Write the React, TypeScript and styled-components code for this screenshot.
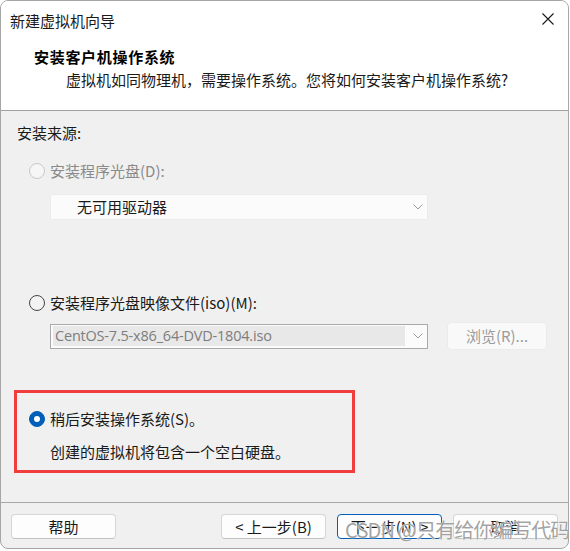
import React from "react";
import styled, { createGlobalStyle } from "styled-components";

const Global = createGlobalStyle`
  html, body { margin: 0; padding: 0; background: #ffffff; }
  body { font-family: "Noto Sans CJK SC", "Microsoft YaHei", sans-serif; font-size: 15px; color: #1a1a1a; }
  * { box-sizing: border-box; }
`;

const Window = styled.div`
  position: relative;
  width: 569px;
  height: 549px;
  border: 1px solid #a6a6a6;
  border-radius: 8px;
  overflow: hidden;
  background: #f0f0f0;
  display: flex;
  flex-direction: column;
`;

const Header = styled.div`
  height: 110px;
  flex: none;
  background: #ffffff;
  border-bottom: 1px solid #a0a0a0;
  display: flex;
  flex-direction: column;
`;

const TitleBar = styled.div`
  height: 39px;
  display: flex;
  align-items: center;
  justify-content: space-between;
  padding: 0 14px 0 9px;
`;

const TitleText = styled.span`
  font-size: 15px;
  line-height: 20px;
  color: #1a1a1a;
`;

const CloseIcon = styled.svg`
  width: 12px;
  height: 12px;
  margin-top: -3px;
`;

const Heading = styled.div`
  margin: 7px 0 0 33px;
  font-size: 15px;
  line-height: 20px;
  font-weight: 700;
  letter-spacing: 0.7px;
  color: #000;
`;

const SubText = styled.div`
  margin: 3px 0 0 65px;
  font-size: 15px;
  line-height: 20px;
  color: #1a1a1a;
`;

const Body = styled.div`
  flex: 1;
  display: flex;
  flex-direction: column;
  align-items: flex-start;
  padding-top: 12px;
`;

const SectionLabel = styled.div`
  margin-left: 16px;
  line-height: 20px;
  color: #1a1a1a;
`;

const RadioRow = styled.div<{ $top: number; $left: number }>`
  display: flex;
  align-items: center;
  gap: 5px;
  margin-top: ${(p) => p.$top}px;
  margin-left: ${(p) => p.$left}px;
  line-height: 20px;
`;

const RadioDot = styled.span<{ $state: "disabled" | "off" | "on" }>`
  width: 16px;
  height: 16px;
  border-radius: 50%;
  flex: none;
  display: flex;
  align-items: center;
  justify-content: center;
  border: 1px solid
    ${(p) => (p.$state === "disabled" ? "#c9c9c9" : p.$state === "on" ? "#005fb8" : "#454545")};
  background: ${(p) => (p.$state === "on" ? "#005fb8" : p.$state === "disabled" ? "#f6f6f6" : "#f3f3f3")};
  &::after {
    content: "";
    display: ${(p) => (p.$state === "on" ? "block" : "none")};
    width: 6px;
    height: 6px;
    border-radius: 50%;
    background: #ffffff;
  }
`;

const RadioLabel = styled.span<{ $disabled?: boolean }>`
  color: ${(p) => (p.$disabled ? "#8a8a8a" : "#1a1a1a")};
`;

const DriveSelect = styled.div`
  margin: 13px 0 0 49px;
  width: 378px;
  height: 26px;
  background: #fbfbfb;
  border: 1px solid #ececec;
  border-radius: 2px;
  display: flex;
  align-items: center;
  justify-content: space-between;
  padding: 0 4px 0 26px;
  color: #1a1a1a;
  line-height: 20px;
`;

const IsoRow = styled.div`
  margin: 9px 0 0 49px;
  display: flex;
  align-items: center;
  gap: 19px;
`;

const IsoSelect = styled.div`
  width: 378px;
  height: 25px;
  background: #fbfbfb;
  border: 1px solid #a9a9a9;
  display: flex;
  align-items: center;
  justify-content: space-between;
  padding: 0 4px 0 2px;
`;

const IsoField = styled.div`
  width: 352px;
  height: 20px;
  background: #e8e8e8;
  color: #7d7d7d;
  font-family: "Open Sans", "Noto Sans", sans-serif;
  font-size: 14.5px;
  letter-spacing: -0.2px;
  line-height: 20px;
  padding-left: 2px;
  white-space: nowrap;
`;

const Chevron = styled.svg`
  width: 10px;
  height: 6px;
  flex: none;
`;

const BrowseButton = styled.div`
  width: 100px;
  height: 28px;
  background: #f9f9f9;
  border: 1px solid #ebebeb;
  border-radius: 4px;
  color: #9b9b9b;
  display: flex;
  align-items: center;
  justify-content: center;
  line-height: 20px;
`;

const Highlight = styled.div`
  margin: 40px 0 0 13px;
  width: 341px;
  height: 83px;
  border: 3px solid #f23d3d;
  display: flex;
  flex-direction: column;
  align-items: flex-start;
  padding: 13px 0 0 12px;
`;

const Description = styled.div`
  margin: 13px 0 0 21px;
  line-height: 20px;
  color: #1a1a1a;
`;

const Footer = styled.div`
  height: 46px;
  flex: none;
  border-top: 1px solid #a8a8a8;
  display: flex;
  align-items: flex-start;
  padding: 11px 10px 0 10px;
  gap: 11px;
`;

const Spacer = styled.div`
  flex: 1;
`;

const Button = styled.div<{ $primary?: boolean }>`
  width: 105px;
  height: 25px;
  border-radius: 4px;
  background: #fdfdfd;
  border: 1px solid ${(p) => (p.$primary ? "#005fb8" : "#d6d6d6")};
  border-bottom-color: ${(p) => (p.$primary ? "#005fb8" : "#c2c2c2")};
  display: flex;
  align-items: center;
  justify-content: center;
  color: #1a1a1a;
  line-height: 20px;
`;

const Watermark = styled.div`
  position: absolute;
  left: 344px;
  top: 517px;
  font-size: 20px;
  line-height: 24px;
  color: rgba(100, 100, 100, 0.6);
  text-shadow: 0 0 1px #fff, 0 0 1px #fff;
  white-space: nowrap;
  pointer-events: none;
  letter-spacing: -0.8px;
`;

const ChevronDown = () => (
  <Chevron viewBox="0 0 10 6">
    <path d="M0.5 0.5 L5 5 L9.5 0.5" fill="none" stroke="#9a9a9a" strokeWidth="1" />
  </Chevron>
);

export default function App() {
  return (
    <>
      <Global />
      <Window>
        <Header>
          <TitleBar>
            <TitleText>新建虚拟机向导</TitleText>
            <CloseIcon viewBox="0 0 12 12">
              <path d="M0.5 0.5 L11.5 11.5 M11.5 0.5 L0.5 11.5" stroke="#1a1a1a" strokeWidth="1.1" />
            </CloseIcon>
          </TitleBar>
          <Heading>安装客户机操作系统</Heading>
          <SubText>虚拟机如同物理机，需要操作系统。您将如何安装客户机操作系统?</SubText>
        </Header>
        <Body>
          <SectionLabel>安装来源:</SectionLabel>
          <RadioRow $top={18} $left={28}>
            <RadioDot $state="disabled" />
            <RadioLabel $disabled>安装程序光盘(D):</RadioLabel>
          </RadioRow>
          <DriveSelect>
            <span>无可用驱动器</span>
            <ChevronDown />
          </DriveSelect>
          <RadioRow $top={73} $left={28}>
            <RadioDot $state="off" />
            <RadioLabel>安装程序光盘映像文件(iso)(M):</RadioLabel>
          </RadioRow>
          <IsoRow>
            <IsoSelect>
              <IsoField>CentOS-7.5-x86_64-DVD-1804.iso</IsoField>
              <ChevronDown />
            </IsoSelect>
            <BrowseButton>浏览(R)...</BrowseButton>
          </IsoRow>
          <Highlight>
            <RadioRow $top={3} $left={0}>
              <RadioDot $state="on" />
              <RadioLabel>稍后安装操作系统(S)。</RadioLabel>
            </RadioRow>
            <Description>创建的虚拟机将包含一个空白硬盘。</Description>
          </Highlight>
        </Body>
        <Footer>
          <Button>帮助</Button>
          <Spacer />
          <Button>&lt; 上一步(B)</Button>
          <Button $primary>下一步(N) &gt;</Button>
          <Button>取消</Button>
        </Footer>
        <Watermark>CSDN @只有给你编写代码</Watermark>
      </Window>
    </>
  );
}
